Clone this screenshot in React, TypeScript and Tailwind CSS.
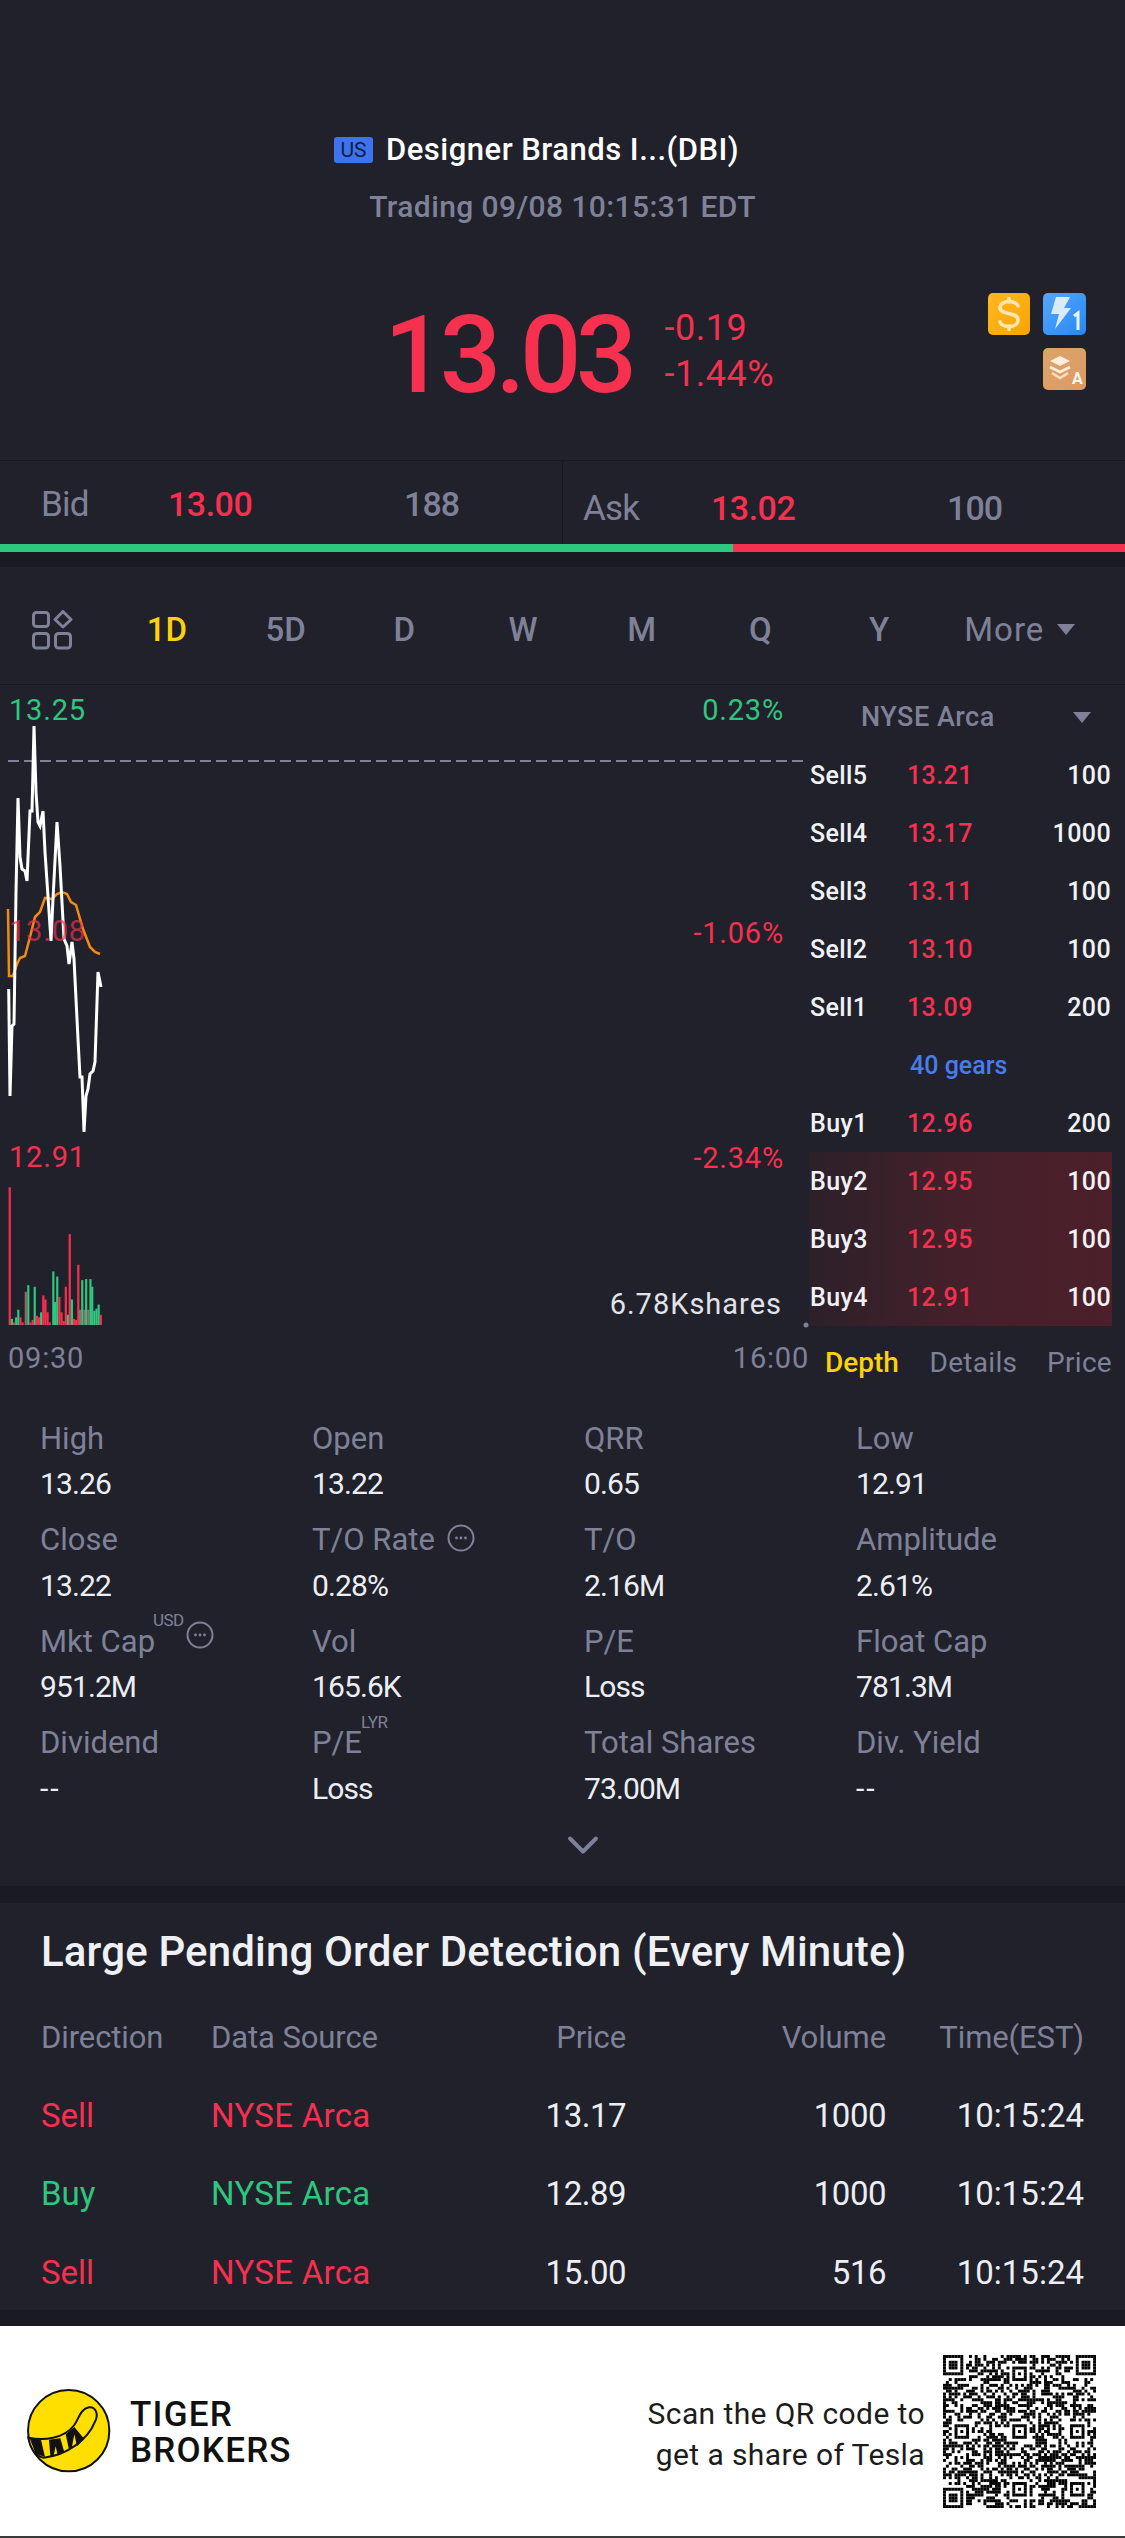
import { ChevronDown } from 'lucide-react';

const RED = 'text-[#f6304f]';
const GREEN = 'text-[#2fc67f]';

const WHITE_LINE =
  '8.7,990 10,1097 12,1027 14,1025 16,893 18,799 20,858 22,870 25,872 27,882 30,812 32,812 34,727 36,793 38,823 40,827 43,812 45,853 51,942 53,900 57,823 60,867 64,940 67,947 69,965 72,943 74,960 78,1040 80,1078 82,1078 84,1133 86,1097 88,1090 90,1075 93,1072 95,1063 98,973 101,988';
const ORANGE_LINE =
  '8,910 9,977 13,977 17,965 20,959 25,957 30,938 35,918 40,913 45,899 52,900 57,895 62,893 67,895 71,903 76,906 83,930 90,948 95,953 100,955';

// [x in zoomed px, height in zoomed px, colour]
const BARS: [number, number, string][] = [
  [27, 270, 'r'], [33, 12, 'g'], [39, 5, 'r'], [45, 15, 'g'], [51, 30, 'g'], [57, 15, 'r'], [63, 5, 'r'],
  [72, 65, 'm'], [79, 78, 'g'], [85, 5, 'r'], [91, 10, 'r'], [97, 75, 'g'], [103, 18, 'r'], [109, 15, 'r'],
  [115, 25, 'g'], [121, 58, 'r'], [127, 50, 'r'], [133, 25, 'r'], [139, 5, 'r'], [149, 105, 'g'], [154, 45, 'g'],
  [160, 95, 'g'], [166, 55, 'r'], [172, 25, 'r'], [178, 8, 'r'], [184, 75, 'r'], [190, 20, 'g'], [195, 178, 'r'],
  [201, 50, 'g'], [207, 12, 'r'], [213, 10, 'r'], [219, 118, 'r'], [224, 30, 'm'], [230, 88, 'g'], [236, 30, 'm'],
  [241, 90, 'g'], [247, 30, 'm'], [253, 90, 'g'], [258, 75, 'g'], [264, 28, 'g'], [270, 32, 'g'], [276, 40, 'g'],
  [282, 20, 'r'],
];
const BAR_FILL: Record<string, string> = { r: '#f6304f', g: '#2fc67f', m: '#9a6a66' };

const ASKS = [
  ['Sell5', '13.21', '100'],
  ['Sell4', '13.17', '1000'],
  ['Sell3', '13.11', '100'],
  ['Sell2', '13.10', '100'],
  ['Sell1', '13.09', '200'],
];
const BIDS = [
  ['Buy1', '12.96', '200'],
  ['Buy2', '12.95', '100'],
  ['Buy3', '12.95', '100'],
  ['Buy4', '12.91', '100'],
];

const TABS = ['1D', '5D', 'D', 'W', 'M', 'Q', 'Y'];

const STATS = [
  ['High', '13.26'], ['Open', '13.22'], ['QRR', '0.65'], ['Low', '12.91'],
  ['Close', '13.22'], ['T/O Rate', '0.28%'], ['T/O', '2.16M'], ['Amplitude', '2.61%'],
  ['Mkt Cap', '951.2M'], ['Vol', '165.6K'], ['P/E', 'Loss'], ['Float Cap', '781.3M'],
  ['Dividend', '--'], ['P/E', 'Loss'], ['Total Shares', '73.00M'], ['Div. Yield', '--'],
];

const ORDERS = [
  ['Sell', '13.17', '1000'],
  ['Buy', '12.89', '1000'],
  ['Sell', '15.00', '516'],
];

function qrModules() {
  const n = 53;
  const cells: boolean[][] = [];
  let seed = 20210908;
  for (let y = 0; y < n; y++) {
    const row: boolean[] = [];
    for (let x = 0; x < n; x++) {
      seed = (seed * 1664525 + 1013904223) >>> 0;
      row.push(seed >>> 24 > 118);
    }
    cells.push(row);
  }
  const stamp = (ox: number, oy: number, size: number) => {
    for (let y = -1; y <= size; y++) {
      for (let x = -1; x <= size; x++) {
        if (!cells[oy + y] || cells[oy + y][ox + x] === undefined) continue;
        const edge = x === 0 || y === 0 || x === size - 1 || y === size - 1;
        const inside = x >= 0 && y >= 0 && x < size && y < size;
        const core = size === 7 ? x >= 2 && x <= 4 && y >= 2 && y <= 4 : x === 2 && y === 2;
        cells[oy + y][ox + x] = inside && (edge || core);
      }
    }
  };
  stamp(0, 0, 7);
  stamp(46, 0, 7);
  stamp(0, 46, 7);
  [[24, 4], [4, 24], [24, 24], [44, 24], [24, 44], [44, 44]].forEach(([x, y]) => stamp(x, y, 5));
  return cells;
}

function QrCode() {
  const cells = qrModules();
  return (
    <svg width="153" height="153" viewBox="0 0 53 53" className="shrink-0">
      {cells.flatMap((row, y) =>
        row.map((on, x) => (on ? <rect key={`${x}-${y}`} x={x} y={y} width="1.02" height="1.02" fill="#000" /> : null))
      )}
    </svg>
  );
}

function MoreDots({ size = 28 }: { size?: number }) {
  return (
    <svg width={size} height={size} viewBox="0 0 28 28" fill="none">
      <circle cx="14" cy="14" r="12.5" stroke="#7f8198" strokeWidth="2" />
      <circle cx="9.5" cy="14" r="1.4" fill="#7f8198" />
      <circle cx="14" cy="14" r="1.4" fill="#7f8198" />
      <circle cx="18.5" cy="14" r="1.4" fill="#7f8198" />
    </svg>
  );
}

function TigerLogo() {
  return (
    <svg width="84" height="84" viewBox="80 90 252 252" className="shrink-0">
      <circle cx="205" cy="215" r="122" fill="#ffdf00" stroke="#111" strokeWidth="6" />
      <path
        d="M84 236 C130 246 190 240 222 198 C236 178 240 150 266 145 C286 143 296 165 284 188 C262 244 196 290 130 296 C106 292 90 268 84 236 Z"
        fill="#ffdf00"
        stroke="#111"
        strokeWidth="6"
      />
      <path d="M88 238 L122 242 L134 294 L106 284 Z" fill="#111" />
      <path d="M146 242 L180 238 L192 280 L172 288 L166 262 L160 290 L150 292 Z" fill="#111" />
      <path d="M196 226 L222 204 L252 240 L230 262 L222 226 L214 268 L206 272 Z" fill="#111" />
    </svg>
  );
}

function Stat({ label, value, index }: { label: string; value: string; index: number }) {
  return (
    <div className="h-[101.5px]">
      <div className="relative flex h-[46px] items-center text-[31px] leading-none text-[#7f8198]">
        <span>{label}</span>
        {index === 5 && (
          <span className="absolute left-[135px] top-[7px]">
            <MoreDots />
          </span>
        )}
        {index === 8 && (
          <>
            <span className="absolute left-[113px] top-[-6px] text-[17px] tracking-[-0.5px]">USD</span>
            <span className="absolute left-[146px] top-[3px]">
              <MoreDots />
            </span>
          </>
        )}
        {index === 13 && <span className="absolute left-[49px] top-[-6px] text-[17px] tracking-[-0.5px]">LYR</span>}
      </div>
      <div className={`flex h-[46px] items-center text-[30px] leading-none text-[#eceef3] ${value === '--' ? 'tracking-[2px]' : 'tracking-[-0.9px]'}`}>{value}</div>
    </div>
  );
}

function BookRow({ row, shaded }: { row: string[]; shaded?: boolean }) {
  return (
    <div className={`flex h-[58px] items-center text-[25px] font-medium leading-none tracking-[0.4px] ${shaded ? 'bg-gradient-to-r from-[#2c2029] via-[#45202a] to-[#4c1f2a]' : ''}`}>
      <span className="w-[98px] pl-[1px] text-[#f1f2f5]">{row[0]}</span>
      <span className={RED}>{row[1]}</span>
      <span className="flex-1 pr-[1px] text-right text-[#f1f2f5]">{row[2]}</span>
    </div>
  );
}

export default function App() {
  return (
    <div className="flex h-[2538px] w-[1125px] flex-col overflow-hidden bg-[#20212b] font-['Roboto',sans-serif]">
      {/* Quote header */}
      <header className="relative h-[460px] shrink-0">
        <div className="flex h-[172px] items-end justify-start pb-[3px] pl-[334px]">
          <div className="flex items-center">
            <span className="flex h-[26px] w-[39px] items-center justify-center rounded-[3px] bg-[#3f72f0] text-[21px] leading-none text-[#12203f]">US</span>
            <span className="ml-[13px] text-[31px] font-medium leading-[38px] tracking-[0.5px] text-white">Designer Brands I...(DBI)</span>
          </div>
        </div>
        <div className="mt-[15px] text-center text-[30px] font-medium leading-[40px] tracking-[0.4px] text-[#7f8198]">
          Trading 09/08 10:15:31 EDT
        </div>
        <div className="mt-[65px] flex items-center pl-[384px]">
          <span className={`text-[108px] font-medium leading-[126px] tracking-[-5.6px] ${RED}`}>13.03</span>
          <div className={`mb-[8px] ml-[33px] flex flex-col gap-[6px] text-[36px] leading-[40px] tracking-[0.5px] ${RED}`}>
            <span>-0.19</span>
            <span>-1.44%</span>
          </div>
        </div>
        <div className="absolute left-[988px] top-[293px] flex h-[42px] w-[42px] items-center justify-center rounded-[5px] bg-gradient-to-br from-[#ffb81e] to-[#f9a400]">
          <svg width="24" height="34" viewBox="0 0 24 34" fill="none" stroke="#ffe6ad" strokeWidth="3.6" strokeLinecap="round">
            <path d="M21 9 C19 5 15 4.5 12 4.5 C7 4.5 3 7 3 10.5 C3 19 21 14 21 23 C21 27 17 29.5 12 29.5 C8 29.5 4 28 3 25" />
            <path d="M12 1.5 V5 M12 29 V32.5" />
          </svg>
        </div>
        <div className="absolute left-[1043px] top-[293px] h-[42px] w-[43px] rounded-[5px] bg-gradient-to-br from-[#55a7fb] to-[#2388f5]">
          <svg width="43" height="42" viewBox="0 0 43 42">
            <path d="M13 4 H27 L21 15 H28 L12 36 L16 21 H8 Z" fill="#d9ecff" />
            <path d="M31 23 L35 20 V37" stroke="#eaf5ff" strokeWidth="3" fill="none" />
          </svg>
        </div>
        <div className="absolute left-[1043px] top-[348px] h-[42px] w-[43px] rounded-[5px] bg-gradient-to-br from-[#dba566] to-[#dc9a68]">
          <svg width="43" height="42" viewBox="0 0 43 42" fill="none">
            <path d="M7 13 L17 8 L27 13 L17 18 Z" fill="#fbeedd" />
            <path d="M7 19 L17 24 L27 19" stroke="#fbeedd" strokeWidth="2.6" />
            <path d="M9 25 L17 30 L25 25" stroke="#f7dfc3" strokeWidth="2.6" />
          </svg>
          <span className="absolute left-[29px] top-[23px] text-[16px] font-bold leading-none text-[#fff6ea]">A</span>
        </div>
      </header>

      {/* Bid / ask */}
      <section className="flex h-[84px] shrink-0 border-t border-[#171820] text-[35px] leading-none">
        <div className="flex w-[563px] items-center border-r border-[#171820] pl-[41px] pt-[3px]">
          <span className="w-[127px] tracking-[-0.8px] text-[#7f8198]">Bid</span>
          <span className={`w-[236px] text-[34px] font-medium tracking-[-0.5px] ${RED}`}>13.00</span>
          <span className="text-[34px] font-medium tracking-[-0.9px] text-[#7f8198]">188</span>
        </div>
        <div className="flex flex-1 items-center pl-[20px] pt-[11px]">
          <span className="w-[128px] tracking-[-0.8px] text-[#7f8198]">Ask</span>
          <span className={`w-[236px] text-[34px] font-medium tracking-[-0.5px] ${RED}`}>13.02</span>
          <span className="text-[34px] font-medium tracking-[-0.9px] text-[#7f8198]">100</span>
        </div>
      </section>
      <div className="flex h-[8px] shrink-0">
        <div className="w-[733px] bg-[#2fc67f]" />
        <div className="flex-1 bg-[#f6304f]" />
      </div>
      <div className="h-[15px] shrink-0 bg-[#1a1b22]" />

      {/* Period tabs */}
      <nav className="flex h-[118px] shrink-0 items-center border-b border-[#171820] pt-[8px] text-[33px] font-medium leading-none text-[#7f8198]">
        <div className="w-[107.5px] pl-[32px]">
          <svg width="41" height="40" viewBox="0 0 41 40" fill="none" stroke="#7f8198" strokeWidth="3">
            <rect x="1.5" y="2.5" width="15" height="14" rx="3" />
            <rect x="1.5" y="23.5" width="15" height="14.5" rx="3" />
            <rect x="23.5" y="23.5" width="15" height="14.5" rx="3" />
            <path d="M31 1.5 L39 9.5 L31 17 L23 9.5 Z" strokeLinejoin="round" />
          </svg>
        </div>
        {TABS.map((t) => (
          <div key={t} className={`w-[118.7px] text-center ${t === '1D' ? 'text-[#fdd20a]' : ''}`}>
            {t}
          </div>
        ))}
        <div className="flex flex-1 items-center pl-[26px] font-normal">
          <span className="tracking-[1px]">More</span>
          <span className="ml-[13px] h-0 w-0 border-x-[9px] border-t-[11px] border-x-transparent border-t-[#7f8198]" />
        </div>
      </nav>

      {/* Chart + order book */}
      <section className="flex h-[715px] shrink-0">
        <div className="relative w-[809px] shrink-0 text-[29px] leading-none tracking-[0.8px]">
          <svg className="absolute left-0 top-[-686px]" width="809" height="1401" viewBox="0 0 809 1401" fill="none">
            <line x1="8" y1="762" x2="805" y2="762" stroke="#7f8198" strokeWidth="2" strokeDasharray="11 5" />
            <polyline points={ORANGE_LINE} stroke="#f28a12" strokeWidth="2.5" />
            <polyline points={WHITE_LINE} stroke="#ffffff" strokeWidth="3" />
            {BARS.map(([x, h, c]) => (
              <rect key={x} x={x / 2.8 - 1} y={1326 - h / 1.96} width="2.2" height={h / 1.96} fill={BAR_FILL[c]} />
            ))}
            <circle cx="806" cy="1326" r="2.5" fill="#7f8198" />
          </svg>
          <span className={`absolute left-[9px] top-[11px] ${GREEN}`}>13.25</span>
          <span className={`absolute right-[25px] top-[11px] ${GREEN}`}>0.23%</span>
          <span className="absolute left-[9px] top-[232px] text-[#f6304f]/70">13.08</span>
          <span className={`absolute right-[25px] top-[234px] ${RED}`}>-1.06%</span>
          <span className={`absolute left-[9px] top-[458px] ${RED}`}>12.91</span>
          <span className={`absolute right-[25px] top-[459px] ${RED}`}>-2.34%</span>
          <span className="absolute right-[27px] top-[605px] tracking-[1px] text-[#e2e3e8]">6.78Kshares</span>
          <span className="absolute left-[8px] top-[659px] text-[#7f8198]">09:30</span>
          <span className="absolute right-0 top-[659px] text-[#7f8198]">16:00</span>
        </div>

        <div className="flex w-[303px] shrink-0 flex-col">
          <div className="flex h-[61px] items-center pl-[52px] pt-[3px] text-[27px] font-medium leading-none tracking-[0.5px] text-[#7f8198]">
            <span>NYSE Arca</span>
            <span className="ml-[78px] h-0 w-0 border-x-[9px] border-t-[11px] border-x-transparent border-t-[#7f8198]" />
          </div>
          {ASKS.map((r) => (
            <BookRow key={r[0]} row={r} />
          ))}
          <div className="flex h-[58px] items-center pl-[101px] text-[25px] font-medium leading-none text-[#4a7bee]">40 gears</div>
          {BIDS.map((r, i) => (
            <BookRow key={r[0]} row={r} shaded={i > 0} />
          ))}
          <div className="flex h-[73px] items-center pl-[16px] pt-[1px] text-[28px] font-medium leading-none text-[#7f8198]">
            <span className="w-[105px] text-[#fdd20a]">Depth</span>
            <span className="w-[118px] font-normal tracking-[0.3px]">Details</span>
            <span className="font-normal tracking-[0.3px]">Price</span>
          </div>
        </div>
      </section>

      {/* Stats */}
      <section className="h-[487px] shrink-0 border-b border-[#171820] pl-[40px] pt-[15px]">
        <div className="grid grid-cols-[272px_272px_272px_1fr]">
          {STATS.map(([label, value], i) => (
            <Stat key={i} label={label} value={value} index={i} />
          ))}
        </div>
        <div className="-mt-[2px] flex justify-center">
          <ChevronDown size={52} strokeWidth={1.8} className="text-[#7f8198]" />
        </div>
      </section>
      <div className="h-[16px] shrink-0 bg-[#1a1b22]" />

      {/* Large orders */}
      <section className="h-[407px] shrink-0 px-[41px]">
        <h2 className="flex h-[98px] items-center whitespace-nowrap text-[42px] font-medium leading-none tracking-[0.15px] text-[#eef0f4]">
          Large Pending Order Detection (Every Minute)
        </h2>
        <div className="grid h-[72px] grid-cols-[170px_239px_176px_260px_198px] items-center text-[31px] leading-none tracking-[-0.1px] text-[#7f8198]">
          <span>Direction</span>
          <span>Data Source</span>
          <span className="text-right">Price</span>
          <span className="text-right">Volume</span>
          <span className="text-right">Time(EST)</span>
        </div>
        <div className="pt-[3px]">
          {ORDERS.map(([dir, price, vol], i) => {
            const tone = dir === 'Sell' ? RED : GREEN;
            return (
              <div key={i} className="grid h-[78.5px] grid-cols-[170px_239px_176px_260px_198px] items-center text-[33px] leading-none text-[#eceef3]">
                <span className={tone}>{dir}</span>
                <span className={`tracking-[0.3px] ${tone}`}>NYSE Arca</span>
                <span className="text-right tracking-[-0.5px]">{price}</span>
                <span className="text-right tracking-[-0.5px]">{vol}</span>
                <span className="text-right">10:15:24</span>
              </div>
            );
          })}
        </div>
      </section>
      <div className="h-[16px] shrink-0 bg-[#1a1b22]" />

      {/* Footer banner */}
      <footer className="flex h-[210px] shrink-0 items-center bg-white pl-[27px] pr-[29px]">
        <TigerLogo />
        <div className="ml-[19px] mt-[3px] text-[35px] font-medium leading-[36px] tracking-[1.2px] text-[#111]">
          <div>TIGER</div>
          <div>BROKERS</div>
        </div>
        <div className="ml-auto mr-[18px] mt-[5px] text-right text-[30px] leading-[41px] tracking-[0.4px] text-[#1c1c1c]">
          <div>Scan the QR code to</div>
          <div>get a share of Tesla</div>
        </div>
        <QrCode />
      </footer>
      <div className="flex-1 bg-[#3a3a3a]" />
    </div>
  );
}
